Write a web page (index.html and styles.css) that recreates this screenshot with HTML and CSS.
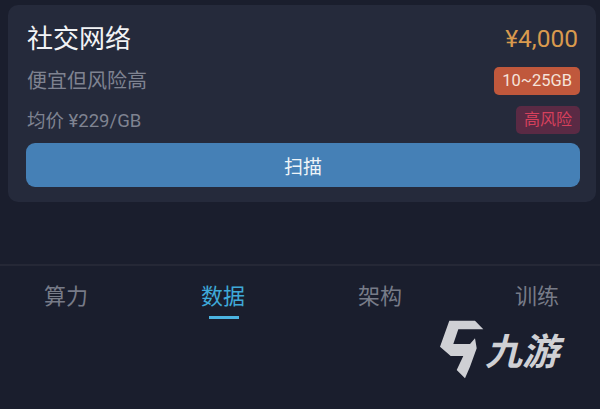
FILE: index.html
```html
<!DOCTYPE html>
<html lang="zh-CN">
  <head>
    <meta charset="UTF-8" />
    <meta name="viewport" content="width=device-width, initial-scale=1.0" />
    <title>数据</title>
    <link rel="stylesheet" href="styles.css">
  </head>

  <body>
    <!-- Data source card -->
    <div class="card">
      <div class="row row-title">
        <span class="name">社交网络</span>
        <span class="price">¥4,000</span>
      </div>
      <div class="row row-desc">
        <span class="desc">便宜但风险高</span>
        <span class="tag tag-size">10~25GB</span>
      </div>
      <div class="row row-avg">
        <span class="avg">均价 ¥229/GB</span>
        <span class="tag tag-risk">高风险</span>
      </div>
      <button class="scan">扫描</button>
    </div>

    <!-- Bottom tabs -->
    <nav class="tabs">
      <span class="tab">算力</span>
      <span class="tab active">数据</span>
      <span class="tab">架构</span>
      <span class="tab">训练</span>
    </nav>

    <!-- Watermark -->
    <div class="logo">
      <svg class="logo-mark" width="44" height="59" viewBox="0 0 44 59">
        <path fill="#cfd0d4" d="M9.3 .7 H35 L43.3 9.3 H18.3 L13.3 24 H30 L35 18.3 L36.7 28.3 L30 46.7 L25 58.3 L16.7 50 L23.3 36 H10.7 L0 26.7 Z" />
      </svg>
      <span class="logo-text">九游</span>
    </div>
  </body>
</html>
```

FILE: styles.css
```css
* {
  box-sizing: border-box;
}

html,
body {
  margin: 0;
  height: 100%;
}

body {
  position: relative;
  overflow: hidden;
  padding-top: 5px;
  background-color: #1a1e2d;
  font-family: "Roboto", "Noto Sans CJK SC", sans-serif;
}

.card {
  margin: 0 4px 0 8px;
  height: 197px;
  padding: 15px 16px 0 18px;
  background-color: #252a3b;
  border-radius: 10px;
}

.row {
  display: flex;
  justify-content: space-between;
  align-items: center;
}

.row-title {
  height: 34px;
}

.row-desc {
  margin-top: 13px;
  height: 28px;
}

.row-avg {
  margin-top: 11px;
  height: 28px;
}

.name {
  margin-top: -2px;
  margin-left: 1px;
  font-size: 26px;
  color: #f2f3f5;
}

.price {
  margin-top: 2px;
  margin-right: 2px;
  font-size: 24.5px;
  color: #d99a4e;
}

.desc {
  margin-top: -3px;
  margin-left: 1px;
  font-size: 20px;
  color: #7f8391;
}

.avg {
  margin-top: -3px;
  margin-left: 1px;
  font-size: 18.5px;
  color: #7f8391;
}

.tag {
  height: 28px;
  padding: 0 8px;
  border-radius: 5px;
  font-size: 16.5px;
  line-height: 28px;
}

.tag-size {
  background-color: #c0583c;
  color: #f5e3da;
}

.tag-risk {
  background-color: #5a2a44;
  color: #d6405c;
  font-size: 16px;
}

.scan {
  display: block;
  width: 100%;
  height: 44px;
  margin-top: 9px;
  padding: 0;
  background-color: #4580b6;
  color: #eef4f8;
  border: none;
  border-radius: 9px;
  font-family: inherit;
  font-size: 19px;
}

.tabs {
  display: flex;
  justify-content: space-between;
  margin-top: 62px;
  padding: 12px 41px 0 44px;
  border-top: 2px solid #252836;
}

.tab {
  position: relative;
  font-size: 22px;
  color: #777b88;
}

.tab.active {
  color: #3fa9d8;
}

.tab.active::after {
  content: "";
  position: absolute;
  left: 8px;
  right: 6px;
  top: 38px;
  height: 3px;
  background-color: #4bb4e2;
}

/* Watermark sits over the page */
.logo {
  position: absolute;
  left: 440px;
  top: 320px;
  display: flex;
  align-items: flex-end;
}

.logo-text {
  margin: 0 0 6px 1px;
  font-size: 37px;
  line-height: 40px;
  font-weight: 700;
  font-style: italic;
  color: #cfd0d4;
}
```
